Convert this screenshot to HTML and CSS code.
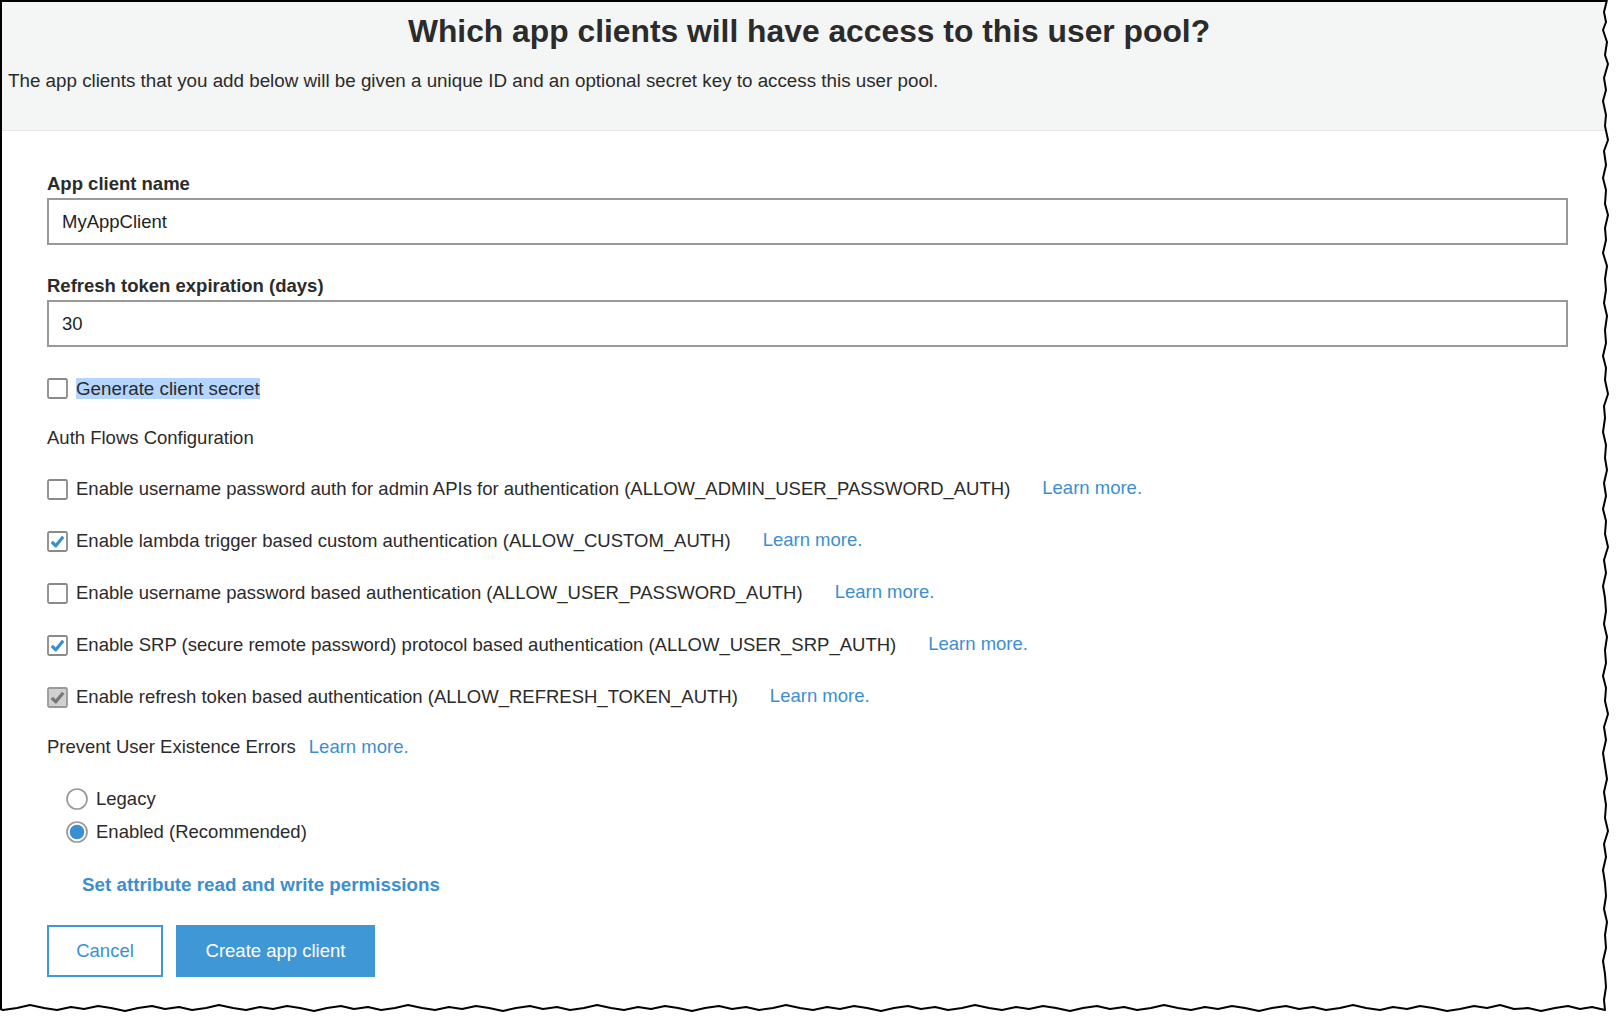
FILE: index.html
```html
<!DOCTYPE html>
<html>
<head>
<meta charset="utf-8">
<link rel="stylesheet" href="styles.css">
</head>
<body>
<div class="frame">
  <header class="head">
    <h1 class="title">Which app clients will have access to this user pool?</h1>
    <p class="sub">The app clients that you add below will be given a unique ID and an optional secret key to access this user pool.</p>
  </header>
  <main class="content">
    <div class="field">
      <div class="lbl">App client name</div>
      <div class="input">MyAppClient</div>
    </div>
    <div class="field field2">
      <div class="lbl">Refresh token expiration (days)</div>
      <div class="input">30</div>
    </div>

    <div class="row secret">
      <svg class="cb" width="21" height="21" viewBox="0 0 21 21"><rect x="1" y="1" width="19" height="19" rx="1.5" fill="#fff" stroke="#8a8a8a" stroke-width="1.8"/></svg>
      <span class="sel">Generate client secret</span>
    </div>

    <div class="section">Auth Flows Configuration</div>

    <div class="row flow first">
      <svg class="cb" width="21" height="21" viewBox="0 0 21 21"><rect x="1" y="1" width="19" height="19" rx="1.5" fill="#fff" stroke="#8a8a8a" stroke-width="1.8"/></svg>
      <span>Enable username password auth for admin APIs for authentication (ALLOW_ADMIN_USER_PASSWORD_AUTH)</span>
      <a class="link more">Learn more.</a>
    </div>
    <div class="row flow">
      <svg class="cb" width="21" height="21" viewBox="0 0 21 21"><rect x="1" y="1" width="19" height="19" rx="1.5" fill="#fff" stroke="#8a8a8a" stroke-width="1.8"/><path d="M4.8 10.8 L8.8 14.8 L16.2 5.8" fill="none" stroke="#3b8fd0" stroke-width="3.2" stroke-linejoin="round"/></svg>
      <span>Enable lambda trigger based custom authentication (ALLOW_CUSTOM_AUTH)</span>
      <a class="link more">Learn more.</a>
    </div>
    <div class="row flow">
      <svg class="cb" width="21" height="21" viewBox="0 0 21 21"><rect x="1" y="1" width="19" height="19" rx="1.5" fill="#fff" stroke="#8a8a8a" stroke-width="1.8"/></svg>
      <span>Enable username password based authentication (ALLOW_USER_PASSWORD_AUTH)</span>
      <a class="link more">Learn more.</a>
    </div>
    <div class="row flow">
      <svg class="cb" width="21" height="21" viewBox="0 0 21 21"><rect x="1" y="1" width="19" height="19" rx="1.5" fill="#fff" stroke="#8a8a8a" stroke-width="1.8"/><path d="M4.8 10.8 L8.8 14.8 L16.2 5.8" fill="none" stroke="#3b8fd0" stroke-width="3.2" stroke-linejoin="round"/></svg>
      <span>Enable SRP (secure remote password) protocol based authentication (ALLOW_USER_SRP_AUTH)</span>
      <a class="link more">Learn more.</a>
    </div>
    <div class="row flow">
      <svg class="cb" width="21" height="21" viewBox="0 0 21 21"><rect x="1" y="1" width="19" height="19" rx="1.5" fill="#d0d0d0" stroke="#999" stroke-width="1.8"/><path d="M4.8 10.8 L8.8 14.8 L16.2 5.8" fill="none" stroke="#777" stroke-width="3.2" stroke-linejoin="round"/></svg>
      <span>Enable refresh token based authentication (ALLOW_REFRESH_TOKEN_AUTH)</span>
      <a class="link more">Learn more.</a>
    </div>

    <div class="row prevent">
      <span>Prevent User Existence Errors</span>
      <a class="link near">Learn more.</a>
    </div>

    <div class="radios">
      <div class="row radio">
        <svg class="rd" width="22" height="22" viewBox="0 0 22 22"><circle cx="11" cy="11" r="10" fill="#fff" stroke="#999" stroke-width="1.7"/></svg>
        <span>Legacy</span>
      </div>
      <div class="row radio second">
        <svg class="rd" width="22" height="22" viewBox="0 0 22 22"><circle cx="11" cy="11" r="10" fill="#fff" stroke="#999" stroke-width="1.7"/><circle cx="11" cy="11" r="7.3" fill="#3b8fd0"/></svg>
        <span>Enabled (Recommended)</span>
      </div>
    </div>

    <a class="link attr">Set attribute read and write permissions</a>

    <div class="actions">
      <button class="btn cancel">Cancel</button>
      <button class="btn create">Create app client</button>
    </div>
  </main>
</div>
<svg class="torn" width="1616" height="1032" viewBox="0 0 1616 1032">
  <path fill="#fff" d="M1616,0 L1607,0 L1604,12 L1606,22 L1603,30 L1607,42 L1605,55 L1608,64 L1604,78 L1606,90 L1603,101 L1606,115 L1605,126 L1608,140 L1604,151 L1606,165 L1603,178 L1606,190 L1605,204 L1608,215 L1605,228 L1606,240 L1603,253 L1607,266 L1605,279 L1606,290 L1604,303 L1607,316 L1605,330 L1606,343 L1603,356 L1606,368 L1605,380 L1608,394 L1604,406 L1605,418 L1603,432 L1606,445 L1605,458 L1607,470 L1604,483 L1606,496 L1603,509 L1606,521 L1605,534 L1608,547 L1604,560 L1606,573 L1603,586 L1605,598 L1606,611 L1604,624 L1607,637 L1605,650 L1606,663 L1603,676 L1606,688 L1605,701 L1608,714 L1604,727 L1606,740 L1603,753 L1605,766 L1607,779 L1604,792 L1606,805 L1605,818 L1608,831 L1604,844 L1606,857 L1603,870 L1605,883 L1606,896 L1604,909 L1607,922 L1605,935 L1606,948 L1603,961 L1605,974 L1606,987 L1604,1000 L1605,1010 L1592,1007 L1580,1009 L1568,1006 L1555,1008 L1541,1011 L1528,1008 L1514,1009 L1500,1005 L1487,1008 L1474,1006 L1460,1009 L1447,1011 L1433,1008 L1420,1006 L1407,1009 L1393,1007 L1380,1010 L1366,1008 L1353,1005 L1340,1008 L1326,1010 L1313,1007 L1299,1009 L1286,1006 L1272,1008 L1259,1011 L1245,1008 L1232,1006 L1218,1009 L1205,1007 L1191,1010 L1178,1008 L1164,1005 L1151,1008 L1137,1010 L1124,1007 L1110,1009 L1097,1006 L1083,1008 L1070,1011 L1056,1008 L1043,1006 L1029,1009 L1016,1007 L1002,1010 L989,1008 L975,1005 L962,1008 L948,1010 L935,1007 L921,1009 L908,1006 L894,1008 L881,1011 L867,1008 L854,1006 L840,1009 L827,1007 L813,1010 L800,1008 L786,1005 L773,1008 L759,1010 L746,1007 L732,1009 L719,1006 L705,1008 L692,1011 L678,1008 L665,1006 L651,1009 L638,1007 L624,1010 L611,1008 L597,1005 L584,1008 L570,1010 L557,1007 L543,1009 L530,1006 L516,1008 L503,1011 L489,1008 L476,1006 L462,1009 L449,1007 L435,1010 L422,1008 L408,1005 L395,1008 L381,1010 L368,1007 L354,1009 L341,1006 L327,1008 L314,1011 L300,1008 L287,1006 L273,1009 L260,1007 L246,1010 L233,1008 L219,1005 L206,1008 L192,1010 L179,1007 L165,1009 L152,1006 L138,1008 L125,1011 L111,1008 L98,1006 L84,1009 L71,1007 L57,1010 L44,1008 L30,1005 L17,1008 L3,1010 L0,1009 L0,1032 L1616,1032 Z"/>
  <path fill="none" stroke="#000" stroke-width="2" stroke-linejoin="round" d="M1607,0 L1604,12 L1606,22 L1603,30 L1607,42 L1605,55 L1608,64 L1604,78 L1606,90 L1603,101 L1606,115 L1605,126 L1608,140 L1604,151 L1606,165 L1603,178 L1606,190 L1605,204 L1608,215 L1605,228 L1606,240 L1603,253 L1607,266 L1605,279 L1606,290 L1604,303 L1607,316 L1605,330 L1606,343 L1603,356 L1606,368 L1605,380 L1608,394 L1604,406 L1605,418 L1603,432 L1606,445 L1605,458 L1607,470 L1604,483 L1606,496 L1603,509 L1606,521 L1605,534 L1608,547 L1604,560 L1606,573 L1603,586 L1605,598 L1606,611 L1604,624 L1607,637 L1605,650 L1606,663 L1603,676 L1606,688 L1605,701 L1608,714 L1604,727 L1606,740 L1603,753 L1605,766 L1607,779 L1604,792 L1606,805 L1605,818 L1608,831 L1604,844 L1606,857 L1603,870 L1605,883 L1606,896 L1604,909 L1607,922 L1605,935 L1606,948 L1603,961 L1605,974 L1606,987 L1604,1000 L1605,1010 L1592,1007 L1580,1009 L1568,1006 L1555,1008 L1541,1011 L1528,1008 L1514,1009 L1500,1005 L1487,1008 L1474,1006 L1460,1009 L1447,1011 L1433,1008 L1420,1006 L1407,1009 L1393,1007 L1380,1010 L1366,1008 L1353,1005 L1340,1008 L1326,1010 L1313,1007 L1299,1009 L1286,1006 L1272,1008 L1259,1011 L1245,1008 L1232,1006 L1218,1009 L1205,1007 L1191,1010 L1178,1008 L1164,1005 L1151,1008 L1137,1010 L1124,1007 L1110,1009 L1097,1006 L1083,1008 L1070,1011 L1056,1008 L1043,1006 L1029,1009 L1016,1007 L1002,1010 L989,1008 L975,1005 L962,1008 L948,1010 L935,1007 L921,1009 L908,1006 L894,1008 L881,1011 L867,1008 L854,1006 L840,1009 L827,1007 L813,1010 L800,1008 L786,1005 L773,1008 L759,1010 L746,1007 L732,1009 L719,1006 L705,1008 L692,1011 L678,1008 L665,1006 L651,1009 L638,1007 L624,1010 L611,1008 L597,1005 L584,1008 L570,1010 L557,1007 L543,1009 L530,1006 L516,1008 L503,1011 L489,1008 L476,1006 L462,1009 L449,1007 L435,1010 L422,1008 L408,1005 L395,1008 L381,1010 L368,1007 L354,1009 L341,1006 L327,1008 L314,1011 L300,1008 L287,1006 L273,1009 L260,1007 L246,1010 L233,1008 L219,1005 L206,1008 L192,1010 L179,1007 L165,1009 L152,1006 L138,1008 L125,1011 L111,1008 L98,1006 L84,1009 L71,1007 L57,1010 L44,1008 L30,1005 L17,1008 L3,1010 L0,1009"/>
</svg>
</body>
</html>
```

FILE: styles.css
```css
* { box-sizing: border-box; }

html, body {
  margin: 0;
  padding: 0;
  background: #fff;
}

body {
  position: relative;
  width: 1616px;
  height: 1032px;
  overflow: hidden;
  font-family: "Liberation Sans", Arial, Helvetica, sans-serif;
  font-size: 18.5px;
  color: #2b2b2b;
}

.frame {
  border-top: 2px solid #000;
  border-left: 2px solid #000;
  height: 1032px;
  background: #fff;
}

.head {
  background: #f4f5f5;
  height: 129px;
  border-bottom: 1px solid #e6e8e8;
  padding: 10px 0 0 6px;
}

.title {
  margin: 0;
  text-align: center;
  font-size: 31.8px;
  line-height: 38px;
  font-weight: bold;
  color: #2b2b2b;
  padding-right: 6px;
}

.sub {
  margin: 19px 0 0 0;
  font-size: 18.8px;
  line-height: 24px;
}

.content {
  padding: 42px 48px 0 45px;
}

.lbl {
  font-weight: bold;
  line-height: 22px;
  margin-bottom: 3px;
}

.input {
  height: 47px;
  border: 2px solid #999;
  padding-left: 13px;
  display: flex;
  align-items: center;
  color: #1f1f1f;
}

.field2 {
  margin-top: 30px;
}

.row {
  display: flex;
  align-items: center;
  height: 24px;
  line-height: 24px;
}

.cb {
  flex: none;
  margin-right: 8px;
}

.secret {
  margin-top: 29px;
}

.sel {
  background: #b4d5fd;
  line-height: 21px;
  font-size: 18.8px;
}

.section {
  margin-top: 26px;
  line-height: 24px;
}

.flow {
  margin-top: 28px;
}

.flow.first {
  margin-top: 27px;
}

.link {
  color: #3b8fd0;
  text-decoration: none;
  cursor: pointer;
}

.more {
  margin-left: 32px;
  position: relative;
  top: -1px;
}

.prevent {
  margin-top: 26px;
}

.near {
  margin-left: 13px;
}

.radios {
  padding-left: 19px;
  margin-top: 28px;
}

.rd {
  flex: none;
  margin-right: 8px;
}

.radio.second {
  margin-top: 9px;
}

.attr {
  display: block;
  margin: 29px 0 0 35px;
  font-weight: bold;
  font-size: 18.8px;
  line-height: 24px;
}

.actions {
  display: flex;
  gap: 13px;
  margin-top: 28px;
}

.btn {
  font-family: inherit;
  font-size: 18.5px;
  height: 52px;
  padding: 0;
  border: 2px solid #4097d6;
  cursor: pointer;
}

.cancel {
  width: 116px;
  background: #fff;
  color: #3b8fd0;
}

.create {
  width: 199px;
  background: #4097d6;
  color: #fff;
}

.torn {
  position: absolute;
  top: 0;
  left: 0;
  pointer-events: none;
}
```
